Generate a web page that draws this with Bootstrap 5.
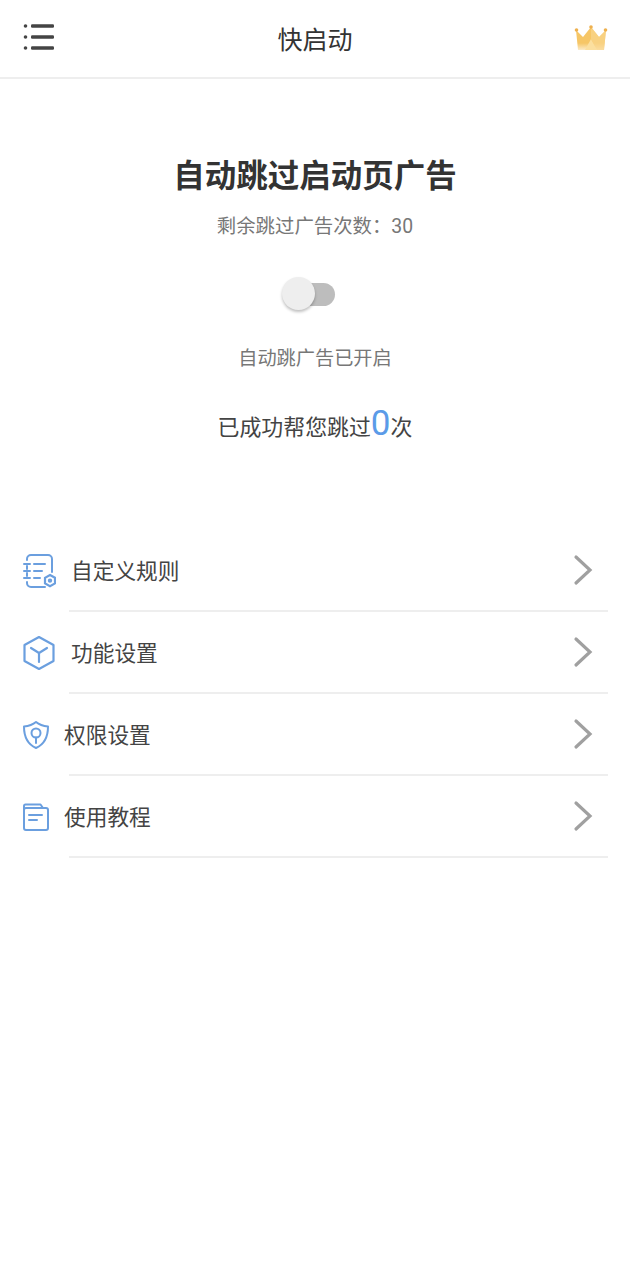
<!DOCTYPE html>
<html lang="zh-CN">
<head>
<meta charset="UTF-8">
<meta name="viewport" content="width=device-width, initial-scale=1.0">
<title>快启动</title>
<link href="https://cdn.jsdelivr.net/npm/bootstrap@5.3.0/dist/css/bootstrap.min.css" rel="stylesheet">
<style>
body { font-family: Roboto, "Noto Sans CJK SC", sans-serif; background: #fff; color: #333; height: 1280px; }
.top-bar { height: 79px; border-bottom: 2px solid #eee; padding: 0 22px 0 22px; }
.top-title { font-size: 25px; color: #333; line-height: 1; padding-top: 4px; }
.hero-box { padding-top: 79px; height: 451px; }
.hero-title { font-size: 31.5px; font-weight: 700; color: #333; line-height: 38px; margin: 0; }
.hero-count { font-size: 19.4px; color: #777; line-height: 24px; margin-top: 19px; }
.toggle-wrap { width: 53px; height: 34px; margin-top: 38px; margin-right: 13px; position: relative; }
.toggle-track { position: absolute; left: 9px; right: 0; top: 6px; height: 23px; border-radius: 12px; background: #bdbdbd; }
.toggle-thumb { position: absolute; left: 0; top: 0; width: 33px; height: 33px; border-radius: 50%; background: #eee; box-shadow: 0 2px 3px rgba(0,0,0,.25); }
.toggle-note { font-size: 19.2px; color: #777; line-height: 24px; margin-top: 36px; }
.done-line { font-size: 21.9px; color: #444; line-height: 40px; margin-top: 33px; }
.done-num { font-size: 35px; color: #5b9be8; }
.menu-row { height: 82px; padding-left: 22px; padding-right: 37px; position: relative; }
.menu-row::after { content: ""; position: absolute; left: 69px; right: 22px; bottom: 0; height: 2px; background: #eee; }
.menu-icon { width: 34px; height: 36px; flex: none; }
.menu-icon-sm { width: 28px; height: 30px; flex: none; }
.menu-text { font-size: 21.7px; color: #444; line-height: 1; margin-top: 1px; margin-left: 15px; }
.menu-gap { margin-left: 14px; }
.menu-arrow { margin-bottom: 2px; }
</style>
</head>
<body>
<div class="top-bar d-flex align-items-center justify-content-between">
    <svg width="34" height="34" viewBox="0 0 34 34" class="mb-1">
        <g fill="#444"><circle cx="3.500" cy="6" r="1.800"/><circle cx="3.500" cy="17" r="1.800"/><circle cx="3.500" cy="28" r="1.800"/>
        <rect x="9" y="4.200" width="23" height="3.600" rx="1.200"/><rect x="9" y="15.200" width="23" height="3.600" rx="1.200"/><rect x="9" y="26.200" width="23" height="3.600" rx="1.200"/></g>
    </svg>
    <div class="top-title">快启动</div>
    <svg width="34" height="30" viewBox="0 0 34 30">
        <defs><linearGradient id="crownFade" x1="0" y1="0" x2="0" y2="1"><stop offset="0.700" stop-color="#f6c666"/><stop offset="1" stop-color="#f6c666" stop-opacity=".35"/></linearGradient></defs>
        <path d="M2 6 L9 13 L17 3 L25 13 L32 6 L30 26 H4 Z" fill="url(#crownFade)"/>
        <path d="M11 26 L17 15 L23 26 Z" fill="#fbdf9f"/>
        <path d="M17 3 L25 13 L32 6 L30 26 H23 L17 15 Z" fill="#f9d68d" opacity=".7"/>
        <circle cx="2.500" cy="6" r="1.800" fill="#eeb04e"/><circle cx="17" cy="3" r="1.800" fill="#eeb04e"/><circle cx="31.500" cy="6" r="1.800" fill="#eeb04e"/>
    </svg>
</div>

<div class="hero-box d-flex flex-column align-items-center text-center">
    <h1 class="hero-title">自动跳过启动页广告</h1>
    <div class="hero-count">剩余跳过广告次数：30</div>
    <div class="toggle-wrap">
        <div class="toggle-track"></div>
        <div class="toggle-thumb"></div>
    </div>
    <div class="toggle-note">自动跳广告已开启</div>
    <div class="done-line">已成功帮您跳过<span class="done-num">0</span>次</div>
</div>

<div class="d-flex flex-column">
    <div class="menu-row d-flex align-items-center">
        <svg class="menu-icon" viewBox="0 0 34 36" fill="none" stroke="#6b9fdf" stroke-width="2" stroke-linecap="round">
            <path d="M5 7V6a4 4 0 0 1 4-4h17a4 4 0 0 1 4 4v13"/>
            <path d="M5 29v1a4 4 0 0 0 4 4h14"/>
            <path d="M2 11h6M2 18h6M2 25h6M5 13v3M5 20v3M12 11h11M12 18h8M12 25h6"/>
            <path d="M28 22l5 2.800v5.600l-5 2.800-5-2.800v-5.600z" stroke-width="2.200"/>
            <circle cx="28" cy="27.600" r="1.200"/>
        </svg>
        <span class="menu-text">自定义规则</span>
        <svg class="ms-auto menu-arrow" width="20" height="32" viewBox="0 0 20 32" fill="none" stroke="#a0a0a0" stroke-width="3.200" stroke-linecap="round"><path d="M3 3l14 13L3 29"/></svg>
    </div>
    <div class="menu-row d-flex align-items-center">
        <svg class="menu-icon" viewBox="0 0 34 36" fill="none" stroke="#6b9fdf" stroke-width="2.200" stroke-linejoin="round" stroke-linecap="round">
            <path d="M17 2l14.500 8v16l-14.500 8-14.500-8V10z"/>
            <path d="M9 13l8 5 8-5M17 18v9"/>
        </svg>
        <span class="menu-text">功能设置</span>
        <svg class="ms-auto menu-arrow" width="20" height="32" viewBox="0 0 20 32" fill="none" stroke="#a0a0a0" stroke-width="3.200" stroke-linecap="round"><path d="M3 3l14 13L3 29"/></svg>
    </div>
    <div class="menu-row d-flex align-items-center">
        <svg class="menu-icon-sm" viewBox="0 0 28 30" fill="none" stroke="#6b9fdf" stroke-width="2" stroke-linejoin="round" stroke-linecap="round">
            <path d="M14 2c3 2.500 7 4 12 4.500C26 16 23 24 14 28 5 24 2 16 2 6.500 7 6 11 4.500 14 2z"/>
            <circle cx="14" cy="13" r="4.500"/>
            <path d="M14 17.500V23"/>
        </svg>
        <span class="menu-text menu-gap">权限设置</span>
        <svg class="ms-auto menu-arrow" width="20" height="32" viewBox="0 0 20 32" fill="none" stroke="#a0a0a0" stroke-width="3.200" stroke-linecap="round"><path d="M3 3l14 13L3 29"/></svg>
    </div>
    <div class="menu-row d-flex align-items-center">
        <svg class="menu-icon-sm" viewBox="0 0 28 30" fill="none" stroke="#6b9fdf" stroke-width="2" stroke-linejoin="round" stroke-linecap="round">
            <path d="M2 8V4a1.500 1.500 0 0 1 1.500-1.500h15L21 6"/>
            <rect x="2" y="6" width="24" height="22" rx="2"/>
            <path d="M7 13h13M7 18h8"/>
        </svg>
        <span class="menu-text menu-gap">使用教程</span>
        <svg class="ms-auto menu-arrow" width="20" height="32" viewBox="0 0 20 32" fill="none" stroke="#a0a0a0" stroke-width="3.200" stroke-linecap="round"><path d="M3 3l14 13L3 29"/></svg>
    </div>
</div>
<script src="https://cdn.jsdelivr.net/npm/bootstrap@5.3.0/dist/js/bootstrap.bundle.min.js"></script>
</body>
</html>
